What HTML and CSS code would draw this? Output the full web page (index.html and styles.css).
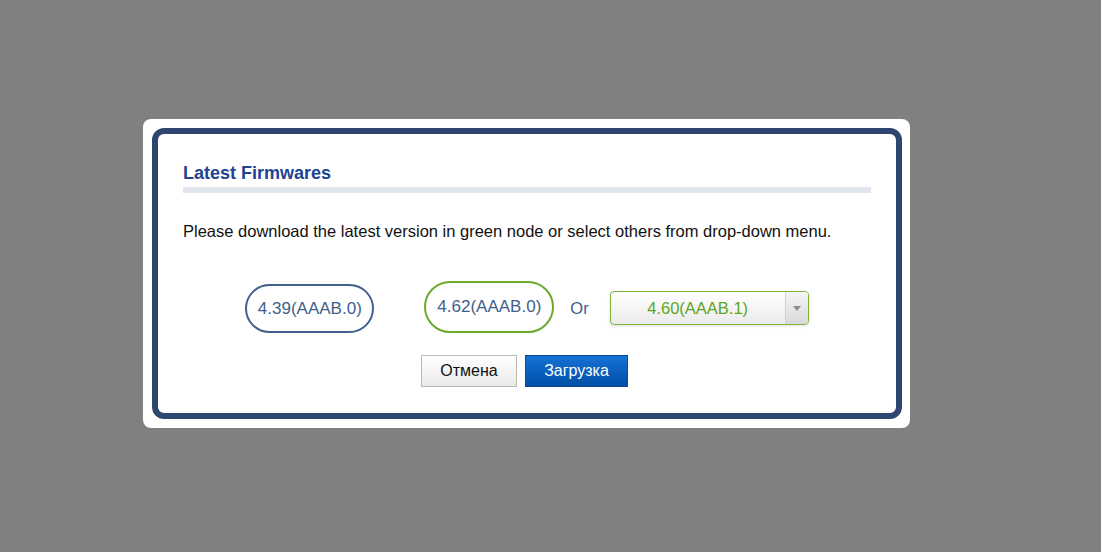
FILE: index.html
```html
<!DOCTYPE html>
<html lang="en">
<head>
    <meta charset="UTF-8">
    <title>Latest Firmwares</title>
    <link rel="stylesheet" href="styles.css">
</head>
<body>
    <div class="modal">
        <div class="frame">
            <h2 class="title">Latest Firmwares</h2>
            <p class="note">Please download the latest version in green node or select others from drop-down menu.</p>
            <div class="versions">
                <div class="node current">4.39(AAAB.0)</div>
                <div class="node latest">4.62(AAAB.0)</div>
                <span class="or">Or</span>
                <div class="select">
                    <span class="select-value">4.60(AAAB.1)</span>
                    <span class="select-arrow"></span>
                </div>
            </div>
            <div class="actions">
                <button class="btn cancel">Отмена</button>
                <button class="btn primary">Загрузка</button>
            </div>
        </div>
    </div>
</body>
</html>
```

FILE: styles.css
```css
* {
    margin: 0;
    padding: 0;
    box-sizing: border-box;
    font-family: 'Liberation Sans', Arial, sans-serif;
}
body {
    background: #808080;
    height: 100vh;
    padding: 119px 0 0 143px;
}
.modal {
    width: 767px;
    background: #fff;
    border-radius: 8px;
    padding: 9px 8px 9px 9px;
}
.frame {
    border: 6px solid #2f4670;
    border-radius: 12px;
    padding: 28px 25px 26px 25px;
}
.title {
    font-size: 18px;
    line-height: 22px;
    font-weight: bold;
    color: #1e4394;
    padding-bottom: 3px;
    border-bottom: 6px solid #e0e5ee;
}
.note {
    margin-top: 28px;
    font-size: 16.5px;
    line-height: 20px;
    color: #111;
}
.versions {
    margin-top: 40px;
    display: flex;
    align-items: center;
    justify-content: center;
    height: 52px;
}
.node {
    display: flex;
    align-items: center;
    justify-content: center;
    border: 2px solid #41628f;
    border-radius: 26px;
    font-size: 17px;
    color: #3f5e8c;
}
.node.current {
    width: 129px;
    height: 49px;
    margin-top: 3px;
}
.node.latest {
    width: 130px;
    height: 52px;
    margin-left: 50px;
    border-color: #6aaa2e;
}
.or {
    margin: 2px 21px 0 16px;
    font-size: 16.5px;
    color: #3f5e8c;
}
.select {
    display: flex;
    width: 199px;
    height: 34px;
    margin-top: 2px;
    border: 1px solid #7ab83a;
    border-radius: 4px;
    background: linear-gradient(#ffffff, #ebebeb);
    box-shadow: 0 1px 3px rgba(0, 0, 0, 0.12);
    overflow: hidden;
}
.select-value {
    flex: 1;
    display: flex;
    align-items: center;
    justify-content: center;
    font-size: 16.5px;
    color: #5ea51e;
}
.select-arrow {
    width: 23px;
    border-left: 1px solid #d2d2d2;
    background: linear-gradient(#f6f6f6, #d9d9d9);
    display: flex;
    align-items: center;
    justify-content: center;
}
.select-arrow::after {
    content: "";
    border-left: 4px solid transparent;
    border-right: 4px solid transparent;
    border-top: 5px solid #8a8a8a;
}
.actions {
    margin-top: 22px;
    display: flex;
    justify-content: center;
    gap: 8px;
    padding-right: 5px;
}
.btn {
    height: 32px;
    font-size: 16px;
    cursor: pointer;
}
.cancel {
    width: 96px;
    border: 1px solid #b8b8b8;
    background: linear-gradient(#ffffff, #e9e9e9);
    color: #111;
}
.primary {
    width: 103px;
    border: 1px solid #0a4a95;
    background: linear-gradient(#1572d4, #004fa8);
    color: #fff;
}
```
